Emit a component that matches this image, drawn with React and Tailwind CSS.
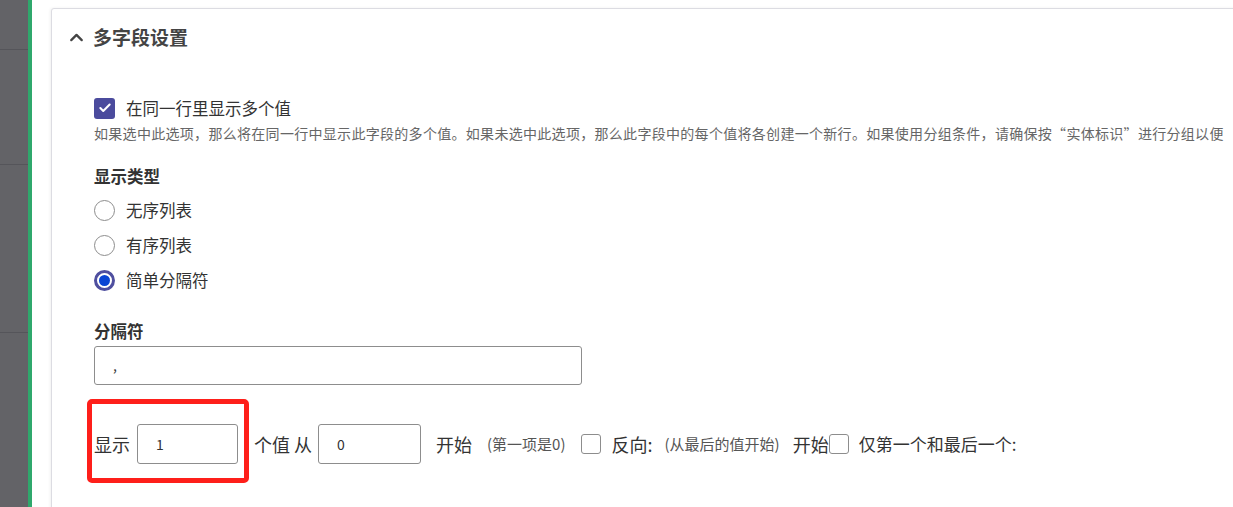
import { ChevronUp, Check } from "lucide-react";

const font = { fontFamily: '"Noto Sans CJK SC", "Noto Sans", sans-serif' };

const Radio = ({ label, checked }) => (
  <label className="flex items-center gap-[11px] h-[35px]">
    {checked ? (
      <span className="w-[21px] h-[21px] rounded-full border-[3px] border-[#4f4f9f] flex items-center justify-center">
        <span className="w-[11px] h-[11px] rounded-full bg-[#0a45d4]" />
      </span>
    ) : (
      <span className="w-[21px] h-[21px] rounded-full border border-[#8d8d8d] bg-white" />
    )}
    <span className="text-[16.5px] text-[#333]">{label}</span>
  </label>
);

const Box = () => (
  <span className="inline-block w-[20px] h-[20px] rounded-[3px] border border-[#8d8d8d] bg-white shrink-0" />
);

export default function App() {
  return (
    <div
      className="flex w-[1233px] h-[507px] overflow-hidden bg-white"
      style={font}
    >
      {/* sidebar */}
      <div className="w-[28px] shrink-0 bg-[#636367] flex flex-col">
        <div className="h-[50px] border-b border-[#55555a]" />
        <div className="h-[115px] border-b border-[#55555a]" />
        <div className="h-[168px] border-b border-[#55555a]" />
      </div>
      <div className="w-[4px] shrink-0 bg-[#2fa86c]" />

      {/* main */}
      <div className="flex-1 pl-[19px] pt-[8px] min-w-0">
        <div className="relative h-[600px] w-[1300px] border border-[#dcdce2] rounded-tl-[3px] shadow-[-1px_0_3px_rgba(0,0,0,0.06)] bg-white">
          {/* header */}
          <div className="flex items-center h-[56px] pl-[14px] gap-[6px]">
            <ChevronUp className="w-[21px] h-[21px] text-[#444]" strokeWidth={2.6} />
            <h2 className="text-[19px] font-bold text-[#444]">多字段设置</h2>
          </div>

          <div className="pl-[42px] pt-[31px]">
            <div className="flex items-center gap-[11px] h-[24px]">
              <span className="w-[21px] h-[21px] rounded-[3px] bg-[#4b4b9d] flex items-center justify-center">
                <Check className="w-[14px] h-[14px] text-white" strokeWidth={3.5} />
              </span>
              <span className="text-[16.5px] text-[#333]">在同一行里显示多个值</span>
            </div>
            <p className="mt-[2px] text-[14px] leading-[22px] tracking-[0.3px] text-[#666] whitespace-nowrap">
              如果选中此选项，那么将在同一行中显示此字段的多个值。如果未选中此选项，那么此字段中的每个值将各创建一个新行。如果使用分组条件，请确保按“实体标识”进行分组以便
            </p>

            <h3 className="mt-[20px] text-[16.5px] font-bold text-[#333] leading-[24px]">显示类型</h3>
            <div className="mt-[5px] flex flex-col">
              <Radio label="无序列表" />
              <Radio label="有序列表" />
              <Radio label="简单分隔符" checked />
            </div>

            <h3 className="mt-[21px] text-[16.5px] font-bold text-[#333] leading-[24px]">分隔符</h3>
            <div className="mt-[3px] w-[488px] h-[39px] border border-[#8d8d8d] rounded-[3px] flex items-center pl-[18px] text-[14px] text-[#333]">
              ,
            </div>

            <div className="mt-[39px] flex items-center h-[40px] text-[18px] text-[#333]">
              <span>显示</span>
              <div className="ml-[7px] w-[101px] h-[40px] border border-[#8d8d8d] rounded-[3px] flex items-center pl-[18px] text-[14px]">1</div>
              <span className="ml-[16px]">个值 从</span>
              <div className="ml-[6px] w-[103px] h-[40px] border border-[#8d8d8d] rounded-[3px] flex items-center pl-[18px] text-[14px]">0</div>
              <span className="ml-[15px]">开始</span>
              <span className="ml-[15px] text-[15px] text-[#555]">(第一项是0)</span>
              <span className="ml-[15px] flex"><Box /></span>
              <span className="ml-[11px]">反向:</span>
              <span className="ml-[12px] text-[15px] text-[#555]">(从最后的值开始)</span>
              <span className="ml-[13px]">开始</span>
              <Box />
              <span className="ml-[10px] text-[17px]">仅第一个和最后一个:</span>
            </div>
          </div>

          {/* highlight annotation */}
          <div className="absolute left-[35px] top-[390px] w-[162px] h-[84px] border-[5px] border-[#fe1f1a] rounded-[5px] pointer-events-none" />
        </div>
      </div>
    </div>
  );
}
